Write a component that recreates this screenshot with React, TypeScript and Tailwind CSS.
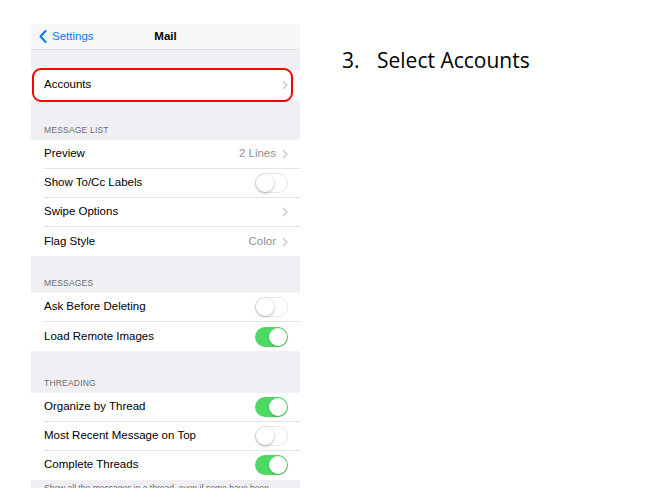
import { ReactNode } from 'react'

type Row = { label: string; value?: string; chevron?: boolean; toggle?: boolean; on?: boolean }

const messageList: Row[] = [
  { label: 'Preview', value: '2 Lines', chevron: true },
  { label: 'Show To/Cc Labels', toggle: true, on: false },
  { label: 'Swipe Options', chevron: true },
  { label: 'Flag Style', value: 'Color', chevron: true },
]

const messages: Row[] = [
  { label: 'Ask Before Deleting', toggle: true, on: false },
  { label: 'Load Remote Images', toggle: true, on: true },
]

const threading: Row[] = [
  { label: 'Organize by Thread', toggle: true, on: true },
  { label: 'Most Recent Message on Top', toggle: true, on: false },
  { label: 'Complete Threads', toggle: true, on: true },
]

function Chevron() {
  return (
    <svg width="6" height="10" viewBox="0 0 6 10" className="ml-[6px]">
      <path d="M1 1l4 4-4 4" fill="none" stroke="#c7c7cc" strokeWidth="1.3" />
    </svg>
  )
}

function Toggle({ on }: { on?: boolean }) {
  return on ? (
    <div className="w-[33px] h-[20px] rounded-full bg-[#4cd964] flex items-center justify-end pr-[1px]">
      <div className="w-[18px] h-[18px] rounded-full bg-white shadow-[0_1px_2px_rgba(0,0,0,0.25)]" />
    </div>
  ) : (
    <div className="w-[33px] h-[20px] rounded-full bg-white border border-[#e5e5ea] flex items-center">
      <div className="w-[18px] h-[18px] rounded-full bg-white shadow-[0_1px_3px_rgba(0,0,0,0.3)]" />
    </div>
  )
}

function Group({ rows }: { rows: Row[] }) {
  return (
    <div className="bg-white">
      {rows.map((r, i) => (
        <div key={r.label} className="pl-[13px]">
          <div className={`h-[29px] flex items-center pr-[12px] ${i < rows.length - 1 ? 'border-b border-[#e3e3e8]' : ''}`}>
            <span className="flex-1 text-[11.5px] text-black">{r.label}</span>
            {r.value && <span className="text-[11.5px] text-[#8e8e93]">{r.value}</span>}
            {r.chevron && <Chevron />}
            {r.toggle && <Toggle on={r.on} />}
          </div>
        </div>
      ))}
    </div>
  )
}

function Header({ children, h }: { children: ReactNode; h: string }) {
  return (
    <div className={`${h} flex items-end pb-[5px] pl-[13px] text-[8.5px] leading-[10px] text-[#6d6d72] uppercase tracking-[0.2px]`}>
      {children}
    </div>
  )
}

export default function App() {
  return (
    <div className="w-[647px] h-[500px] bg-white flex items-start font-['Liberation_Sans',Arial,sans-serif]">
      {/* Telefono */}
      <div className="ml-[31px] mt-[24px] w-[269px] h-[464px] bg-[#efeff4] overflow-hidden">
        <div className="h-[26px] bg-[#f7f7f7] border-b border-[#e0e0e4] relative flex items-center justify-center">
          <div className="absolute left-[8px] top-0 bottom-0 flex items-center gap-[5px] text-[#007aff]">
            <svg width="8" height="13" viewBox="0 0 8 13">
              <path d="M6.5 1L1.5 6.5 6.5 12" fill="none" stroke="#007aff" strokeWidth="2" strokeLinecap="round" strokeLinejoin="round" />
            </svg>
            <span className="text-[11.5px]">Settings</span>
          </div>
          <span className="text-[11.5px] font-semibold text-black">Mail</span>
        </div>

        <div className="h-[20px]" />
        <div className="relative bg-white h-[29.5px] pl-[13px] pr-[12px] flex items-center">
          <span className="flex-1 text-[11.5px] text-black">Accounts</span>
          <Chevron />
          <div className="absolute left-[1px] right-[7px] top-[-2px] bottom-[-2px] border-[2.5px] border-[#ff0000] rounded-[9px]" />
        </div>

        <Header h="h-[40.5px]">Message List</Header>
        <Group rows={messageList} />
        <Header h="h-[37px]">Messages</Header>
        <Group rows={messages} />
        <Header h="h-[41.5px]">Threading</Header>
        <Group rows={threading} />
        <div className="pt-[3px] pl-[13px] pr-[20px] text-[8.5px] leading-[11px] text-[#6d6d72]">
          Show all the messages in a thread, even if some have been moved to other mailboxes.
        </div>
      </div>

      {/* Instrucción */}
      <div className="ml-[42px] mt-[50px] flex text-[21px] text-black font-['Open_Sans',sans-serif] leading-none">
        <span className="w-[35px]">3.</span>
        <span>Select Accounts</span>
      </div>
    </div>
  )
}
